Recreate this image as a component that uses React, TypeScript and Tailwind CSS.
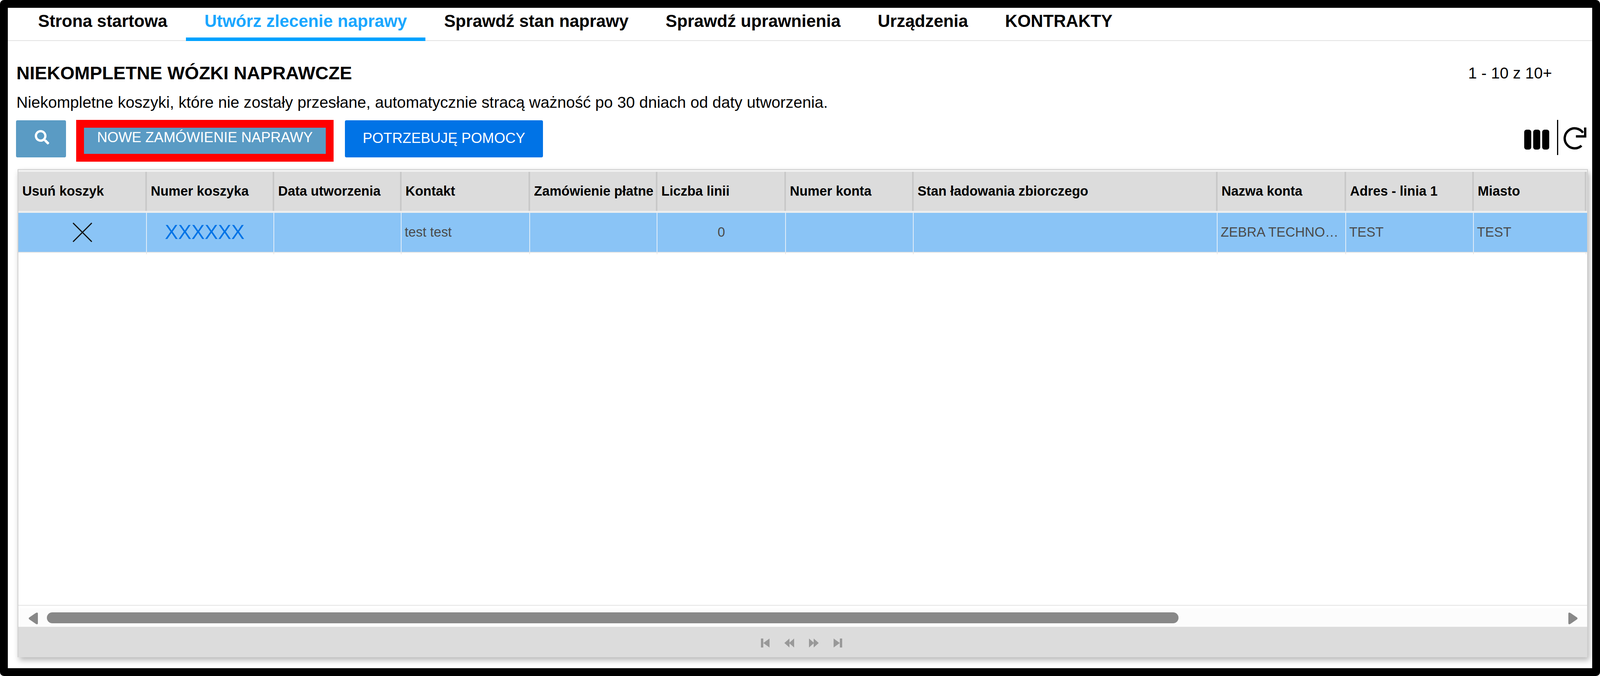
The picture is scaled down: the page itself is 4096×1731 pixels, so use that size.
import { FaSearch } from 'react-icons/fa'

const tabs = ['Strona startowa', 'Utwórz zlecenie naprawy', 'Sprawdź stan naprawy', 'Sprawdź uprawnienia', 'Urządzenia', 'KONTRAKTY']

const columns = ['Usuń koszyk', 'Numer koszyka', 'Data utworzenia', 'Kontakt', 'Zamówienie płatne', 'Liczba linii', 'Numer konta', 'Stan ładowania zbiorczego', 'Nazwa konta', 'Adres - linia 1', 'Miasto']

const gridCols = 'grid grid-cols-[329px_326px_326px_329px_326px_329px_327px_778px_329px_327px_288px]'

function ColumnsIcon() {
  return (
    <svg width="64" height="51" viewBox="0 0 64 51" className="mt-[25px]">
      <rect x="0" y="0" width="18" height="51" rx="6" fill="#000" />
      <rect x="23" y="0" width="18" height="51" rx="6" fill="#000" />
      <rect x="46" y="0" width="18" height="51" rx="6" fill="#000" />
    </svg>
  )
}

function RefreshIcon() {
  return (
    <svg width="62" height="60" viewBox="1270 645 195 190" fill="none" stroke="#000" className="mt-[18px]">
      <path d="M1420 797 A 81 81 0 1 1 1432 692" strokeWidth="19" />
      <path d="M1450 650 V 722 H 1375" strokeWidth="19" />
    </svg>
  )
}

function PagerIcon({ w, d }: { w: number; d: string }) {
  return (
    <svg width={w} height="23" viewBox={`0 0 ${w} 23`} fill="#999">
      <path d={d} />
    </svg>
  )
}

export default function App() {
  return (
    <div className="w-[4096px] h-[1731px] border-[20px] border-black rounded-[10px] bg-white flex flex-col font-['Liberation_Sans',Arial,sans-serif] text-black overflow-hidden">
      <nav className="h-[85px] shrink-0 flex pl-[30px] border-b-2 border-[#e2e2e2]">
        {tabs.map((t, i) => (
          <div
            key={t}
            className={
              i === 1
                ? 'h-[85px] px-[47.5px] pt-[9px] text-[43.8px] leading-[50px] font-bold text-[#1aa7ff] border-b-[9px] border-[#00a2ff]'
                : 'h-[85px] px-[47.5px] pt-[9px] text-[43.8px] leading-[50px] font-bold'
            }
          >
            {t}
          </div>
        ))}
      </nav>

      <main className="flex-1 flex flex-col pl-[21px] pr-[11px]">
        <div className="flex h-[50px] mt-[57px] shrink-0">
          <h1 className="pl-[1px] text-[47px] leading-[50px] font-bold">NIEKOMPLETNE WÓZKI NAPRAWCZE</h1>
          <div className="ml-auto mr-[92px] text-[40.4px] leading-[50px]">1 - 10 z 10+</div>
        </div>
        <p className="h-[40px] mt-[30px] pl-[1px] shrink-0 text-[40.6px] leading-[40px] whitespace-nowrap">
          Niekompletne koszyki, które nie zostały przesłane, automatycznie stracą ważność po 30 dniach od daty utworzenia.
        </p>

        <div className="flex items-start h-[107px] mt-[25px] shrink-0 pr-[2px]">
          <button className="w-[128px] h-[95px] mt-[1px] bg-[#5a9bc4] rounded-[4px] flex items-center justify-center text-white">
            <FaSearch size={37} className="mb-[8px] ml-[4px]" />
          </button>
          <div className="ml-[26px] w-[659px] h-[107px] border-[20px] border-[#ff0000] bg-[#5a9bc4] flex items-center justify-center pb-[16px] text-white text-[36.5px]">
            NOWE ZAMÓWIENIE NAPRAWY
          </div>
          <button className="ml-[29px] w-[507px] h-[95px] mt-[1px] pb-[4px] bg-[#0073e6] rounded-[4px] text-white text-[36.7px]">
            POTRZEBUJĘ POMOCY
          </button>
          <div className="ml-auto flex items-start">
            <ColumnsIcon />
            <div className="ml-[20px] w-[3px] h-[90px] bg-black" />
            <div className="ml-[12px]">
              <RefreshIcon />
            </div>
          </div>
        </div>

        <section className="mt-[19px] ml-[4px] h-[1250px] shrink-0 flex flex-col border-x-2 border-t-2 border-[#cfcfcf] bg-white shadow-[4px_8px_14px_rgba(0,0,0,0.28)]">
          <div className={`${gridCols} h-[5px] bg-[#f0f0f0]`} />
          <div className={`${gridCols} h-[100px] bg-[#dcdcdc]`}>
            {columns.map((c) => (
              <div key={c} className="flex items-center pl-[10px] border-r-4 border-[#c8c8c8] text-[34.2px] font-bold whitespace-nowrap overflow-hidden">
                {c}
              </div>
            ))}
          </div>
          <div className={`${gridCols} h-[5px] bg-[#eeeeee]`} />
          <div className={`${gridCols} h-[100px] bg-[#8ac4f6] text-[34.4px] text-[#4a4a4a]`}>
            <div className="flex items-center justify-center border-r-2 border-[#e3eef8]">
              <svg width="52" height="50" viewBox="0 0 52 50" stroke="#111" strokeWidth="3">
                <path d="M2 1 L50 49 M50 1 L2 49" />
              </svg>
            </div>
            <div className="flex items-center justify-center pr-[28px] border-r-2 border-[#e3eef8] text-[51px] text-[#0073e6]">XXXXXX</div>
            <div className="border-r-2 border-[#e3eef8]" />
            <div className="flex items-center pl-[8px] border-r-2 border-[#e3eef8]">test test</div>
            <div className="border-r-2 border-[#e3eef8]" />
            <div className="flex items-center justify-center border-r-2 border-[#e3eef8]">0</div>
            <div className="border-r-2 border-[#e3eef8]" />
            <div className="border-r-2 border-[#e3eef8]" />
            <div className="flex items-center pl-[8px] pr-[10px] border-r-2 border-[#e3eef8] min-w-0">
              <span className="block w-full min-w-0 truncate">ZEBRA TECHNOLOGIES</span>
            </div>
            <div className="flex items-center pl-[8px] border-r-2 border-[#e3eef8]">TEST</div>
            <div className="flex items-center pl-[8px]">TEST</div>
          </div>
          <div className={`${gridCols} h-[6px] border-t-2 border-[#e2e2e2]`}>
            {columns.map((c) => (
              <div key={c} className="border-r-2 border-[#e6e6e6]" />
            ))}
          </div>
          <div className="flex-1" />
          <div className="h-[9px] border-t-2 border-[#e4e4e4]" />
          <div className="h-[47px] bg-[#fcfcfc] flex items-start">
            <svg width="24" height="31" viewBox="0 0 24 31" fill="#888" className="ml-[26px] mt-[10px]">
              <path d="M22 0.5 Q24 0.5 24 3 V28 Q24 30.5 22 30.5 Q20 30.5 18 29 L2 18 Q-1 15.5 2 13 L18 2 Q20 0.5 22 0.5 Z" />
            </svg>
            <div className="ml-[23px] mt-[10px] w-[2897px] h-[28px] rounded-[14px] bg-[#888888]" />
            <svg width="24" height="31" viewBox="0 0 24 31" fill="#888" className="ml-auto mr-[24px] mt-[10px]">
              <path d="M2 0.5 Q0 0.5 0 3 V28 Q0 30.5 2 30.5 Q4 30.5 6 29 L22 18 Q25 15.5 22 13 L6 2 Q4 0.5 2 0.5 Z" />
            </svg>
          </div>
          <div className="h-[78px] bg-[#dcdcdc] flex items-start justify-center pt-[30px] gap-[38px] pr-[6px]">
            <PagerIcon w={22} d="M0 0 H6 V23 H0 Z M22 0 V23 L6 11.5 Z" />
            <PagerIcon w={25} d="M0 11.5 L13 0 V23 Z M12 11.5 L25 0 V23 Z" />
            <PagerIcon w={25} d="M0 0 L13 11.5 L0 23 Z M12 0 L25 11.5 L12 23 Z" />
            <PagerIcon w={22} d="M16 0 H22 V23 H16 Z M0 0 L16 11.5 L0 23 Z" />
          </div>
        </section>
      </main>
    </div>
  )
}
